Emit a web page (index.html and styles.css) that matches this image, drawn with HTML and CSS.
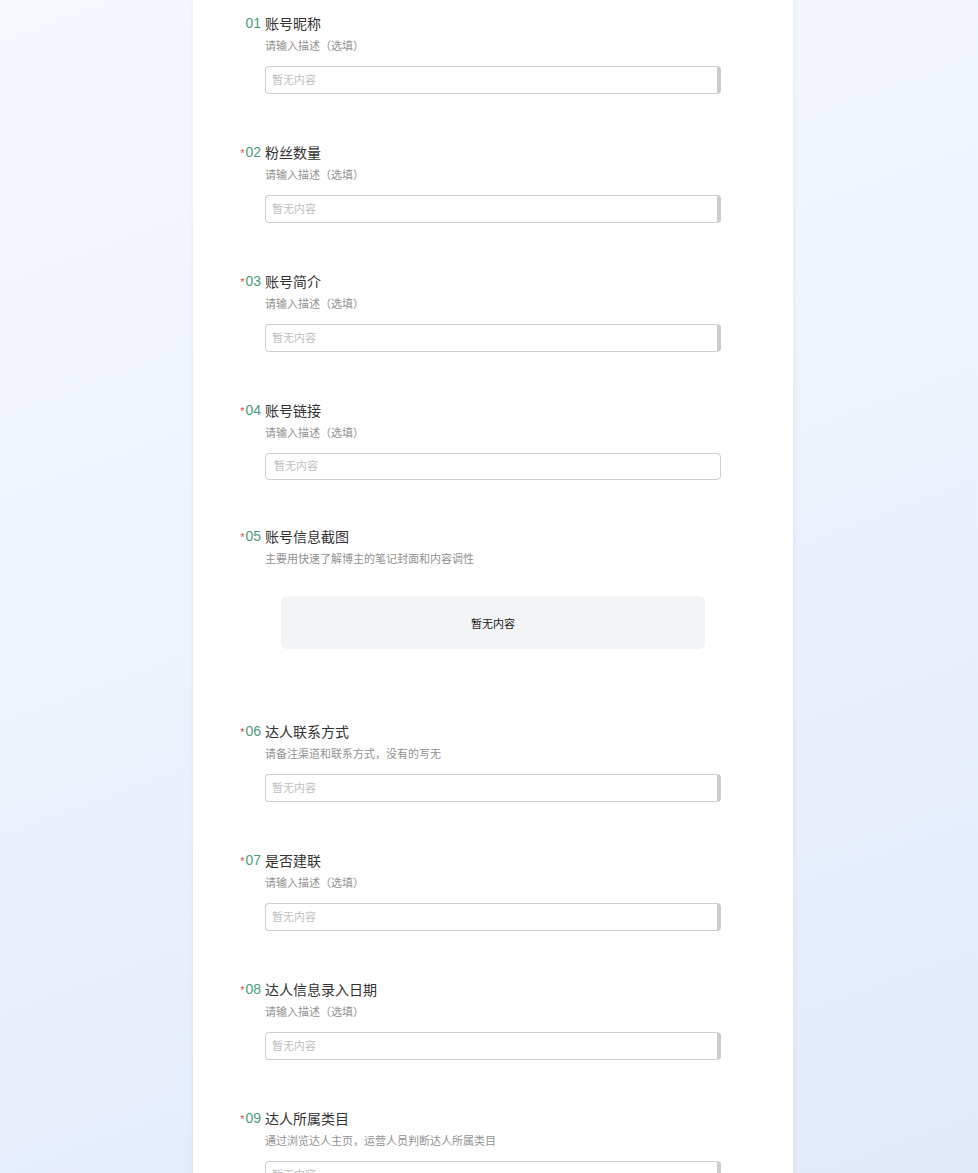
FILE: index.html
```html
<!DOCTYPE html>
<html>
<head>
  <title>达人信息表</title>
  <link rel="stylesheet" href="styles.css">
</head>
<body>
  <div class="page">
    <div class="card">

      <div class="item">
        <div class="item-head"><span class="mark"><span class="num">01</span></span><span class="title">账号昵称</span></div>
        <div class="desc">请输入描述（选填）</div>
        <div class="field field-area">暂无内容</div>
      </div>

      <div class="item">
        <div class="item-head"><span class="mark"><span class="star">*</span><span class="num">02</span></span><span class="title">粉丝数量</span></div>
        <div class="desc">请输入描述（选填）</div>
        <div class="field field-area">暂无内容</div>
      </div>

      <div class="item">
        <div class="item-head"><span class="mark"><span class="star">*</span><span class="num">03</span></span><span class="title">账号简介</span></div>
        <div class="desc">请输入描述（选填）</div>
        <div class="field field-area">暂无内容</div>
      </div>

      <div class="item item-short">
        <div class="item-head"><span class="mark"><span class="star">*</span><span class="num">04</span></span><span class="title">账号链接</span></div>
        <div class="desc">请输入描述（选填）</div>
        <div class="field">暂无内容</div>
      </div>

      <div class="item item-upload">
        <div class="item-head"><span class="mark"><span class="star">*</span><span class="num">05</span></span><span class="title">账号信息截图</span></div>
        <div class="desc">主要用快速了解博主的笔记封面和内容调性</div>
        <div class="empty-box">暂无内容</div>
      </div>

      <div class="item">
        <div class="item-head"><span class="mark"><span class="star">*</span><span class="num">06</span></span><span class="title">达人联系方式</span></div>
        <div class="desc">请备注渠道和联系方式，没有的写无</div>
        <div class="field field-area">暂无内容</div>
      </div>

      <div class="item">
        <div class="item-head"><span class="mark"><span class="star">*</span><span class="num">07</span></span><span class="title">是否建联</span></div>
        <div class="desc">请输入描述（选填）</div>
        <div class="field field-area">暂无内容</div>
      </div>

      <div class="item">
        <div class="item-head"><span class="mark"><span class="star">*</span><span class="num">08</span></span><span class="title">达人信息录入日期</span></div>
        <div class="desc">请输入描述（选填）</div>
        <div class="field field-area">暂无内容</div>
      </div>

      <div class="item">
        <div class="item-head"><span class="mark"><span class="star">*</span><span class="num">09</span></span><span class="title">达人所属类目</span></div>
        <div class="desc">通过浏览达人主页，运营人员判断达人所属类目</div>
        <div class="field field-area">暂无内容</div>
      </div>

    </div>
  </div>
</body>
</html>
```

FILE: styles.css
```css
html, body {
  margin: 0;
  height: 100%;
}

body {
  font-family: "Liberation Sans", "Noto Sans CJK SC", sans-serif;
  background: linear-gradient(160deg, #f6f8fd 0%, #eef3fd 45%, #e1e9fb 100%);
  overflow: hidden;
}

.page {
  display: flex;
  justify-content: center;
  padding-left: 8px;
  min-height: 100%;
}

.card {
  width: 600px;
  background-color: #fff;
  box-shadow: 0 0 6px rgba(150, 170, 210, 0.18);
  padding: 13px 72px 0 72px;
  box-sizing: border-box;
}

.item {
  padding-bottom: 48px;
}

.item-short {
  padding-bottom: 46px;
}

.item-upload {
  padding-bottom: 72px;
}

.item-head {
  display: flex;
  align-items: center;
  height: 20px;
  margin-left: -34px;
}

.mark {
  width: 30px;
  margin-right: 4px;
  display: flex;
  justify-content: flex-end;
  align-items: center;
}

.star {
  color: #e0524f;
  font-size: 11px;
  margin-right: 1px;
  position: relative;
  top: 1px;
}

.num {
  color: #4a9d7c;
  font-size: 14px;
}

.title {
  color: #333;
  font-size: 14px;
}

.desc {
  margin-top: 3px;
  height: 20px;
  line-height: 20px;
  font-size: 11px;
  color: #929292;
}

.field {
  margin-top: 10px;
  height: 27px;
  line-height: 25px;
  box-sizing: border-box;
  border: 1px solid #cfcfcf;
  border-radius: 4px;
  padding-left: 8px;
  font-size: 11px;
  color: #c0c0c0;
}

.field-area {
  height: 28px;
  line-height: 26px;
  padding-left: 6px;
  border-right: 4px solid #cdcdcd;
}

.empty-box {
  margin: 27px 16px 0 16px;
  height: 53px;
  background-color: #f3f4f6;
  border-radius: 6px;
  display: flex;
  justify-content: center;
  align-items: center;
  font-size: 11px;
  color: #222;
}
```
